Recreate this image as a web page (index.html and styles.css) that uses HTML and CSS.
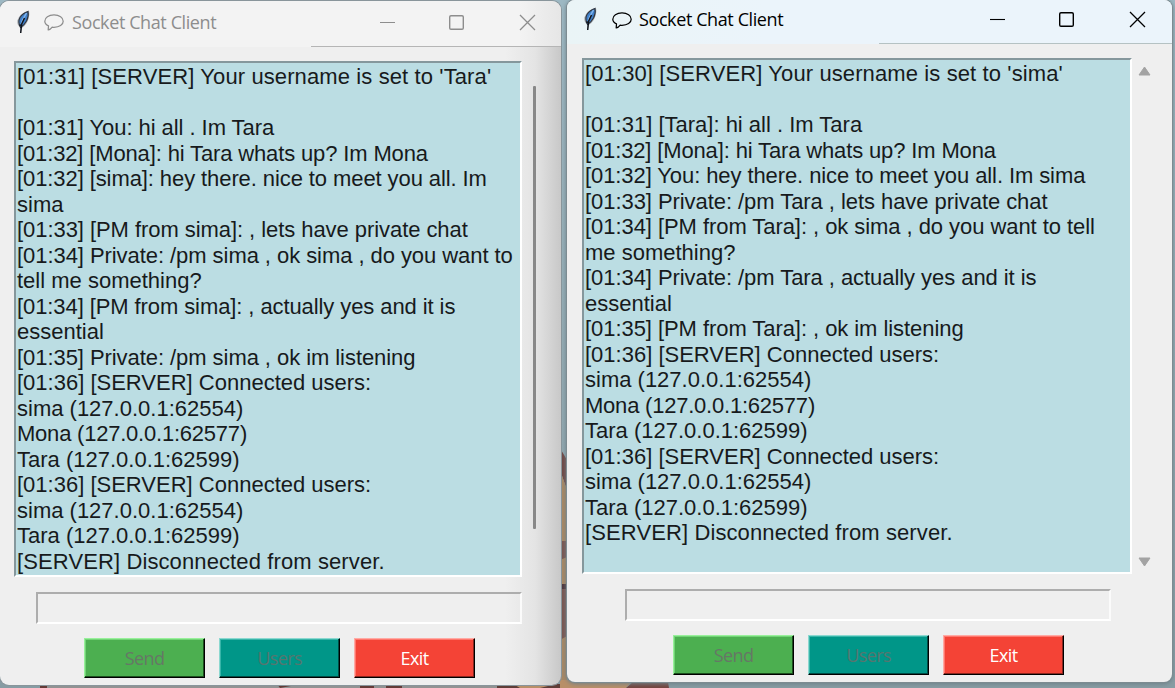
FILE: index.html
```html
<!DOCTYPE html>
<html lang="en">
<head>
<meta charset="utf-8">
<title>Socket Chat Client</title>
<link rel="stylesheet" href="styles.css">
</head>
<body>
<svg width="0" height="0" class="defs">
  <symbol id="feather" viewBox="0 0 14 24">
    <path d="M4.500 23.500 4.600 17.500Q.8 15.500 1.300 10.500Q3.500 3.500 12.800 .5Q14 3.500 12.500 9Q10.500 15 6 18Z" fill="#a9afb5"/>
    <path d="M4.500 17.500Q1.500 12 4 7.500Q7 3 12 1.500Q13 6 10.500 11Q8 15.500 4.500 17.500Z" fill="#3f7fc8" stroke="#30353d" stroke-width="1.100"/>
    <path d="M10.500 3 6.500 10 4.800 16" fill="none" stroke="#80b5ee" stroke-width="1.500"/>
    <path d="M8.500 8 5.500 14.500 4.700 23M3.500 15 6.500 15.500" fill="none" stroke="#10141b" stroke-width="1.500"/>
  </symbol>
  <symbol id="bubble" viewBox="0 0 20 17">
    <path d="M4.200 15.900 4.500 11.900C2.300 10.900.8 9.200.8 7.200.8 3.600 4.600.900 10 .900S19.200 3.600 19.200 7.200 15.400 13.300 10 13.300Q9 13.300 8.200 13.100Q6.500 15.400 4.200 15.900Z" fill="none" stroke="currentColor" stroke-width="1.250" stroke-linejoin="round"/>
  </symbol>
  <symbol id="controls" viewBox="0 0 157 17">
    <path d="M0 8.500H15" fill="none" stroke="currentColor" stroke-width="1.100"/>
    <rect x="69.700" y="1.700" width="13.600" height="13.600" rx="1.300" fill="none" stroke="currentColor" stroke-width="1.400"/>
    <path d="M140 1 155 16M155 1 140 16" fill="none" stroke="currentColor" stroke-width="1.300"/>
  </symbol>
</svg>
<main class="desktop">
  <svg class="wallpaper" width="1175" height="688" viewBox="0 0 1175 688">
    <path d="M560 448 567 460V490L560 470Z" fill="#6f4744"/>
    <path d="M560 470 567 490V688H560Z" fill="#a98762"/>
    <path d="M560 541H567V557L560 560ZM560 587H567V636L560 640Z" fill="#7b5650"/>
    <path d="M560 584H567V589H560Z" fill="#4f3439"/>
    <path d="M42 684H500V688H42Z" fill="#929292"/>
    <path d="M40 684H47V688H40ZM277 684H302L280 688ZM360 685H374V688H360ZM386 685H402V688H386Z" fill="#633b37"/>
    <path d="M497 684H565L560 688H497Z" fill="#5f3d37"/>
    <path d="M515 685H552L540 688H520ZM560 680H633L626 688H560Z" fill="#b98f68"/>
    <path d="M633 682H668L669 688H626Z" fill="#74443e"/>
  </svg>
  <section class="window inactive">
    <header class="titlebar">
      <svg class="feather"><use href="#feather"/></svg>
      <svg class="bubble"><use href="#bubble"/></svg>
      <span class="title">Socket Chat Client</span>
      <svg class="controls"><use href="#controls"/></svg>
    </header>
    <div class="chat">
      <div class="log"><span class="wide">[01:31] [SERVER] Your username is set to 'Tara'</span>

<span class="snug">[01:31] You: hi all . Im Tara</span>
<span class="tight">[01:32] [Mona]: hi Tara whats up? Im Mona</span>
<span class="close">[01:32] [sima]: hey there. nice to meet you all. Im</span>
sima
<span class="snug">[01:33] [PM from sima]: , lets have private chat</span>
<span class="snug">[01:34] Private: /pm sima , ok sima , do you want to</span>
tell me something?
<span class="close">[01:34] [PM from sima]: , actually yes and it is</span>
essential
<span class="snug">[01:35] Private: /pm sima , ok im listening</span>
[01:36] [SERVER] Connected users:
sima (127.0.0.1:62554)
<span class="tighter">Mona (127.0.0.1:62577)</span>
Tara (127.0.0.1:62599)
[01:36] [SERVER] Connected users:
sima (127.0.0.1:62554)
Tara (127.0.0.1:62599)
<span class="wide">[SERVER] Disconnected from server.</span></div>
      <div class="scroll-thumb"></div>
    </div>
    <div class="entry"></div>
    <div class="buttons">
      <div class="btn send">Send</div><div class="btn users">Users</div><div class="btn exit">Exit</div>
    </div>
  </section>
  <section class="window active">
    <header class="titlebar">
      <svg class="feather"><use href="#feather"/></svg>
      <svg class="bubble"><use href="#bubble"/></svg>
      <span class="title">Socket Chat Client</span>
      <svg class="controls"><use href="#controls"/></svg>
    </header>
    <div class="chat">
      <div class="log"><span class="wide">[01:30] [SERVER] Your username is set to 'sima'</span>

[01:31] [Tara]: hi all . Im Tara
<span class="tight">[01:32] [Mona]: hi Tara whats up? Im Mona</span>
<span class="close">[01:32] You: hey there. nice to meet you all. Im sima</span>
<span class="snug">[01:33] Private: /pm Tara , lets have private chat</span>
<span class="snug">[01:34] [PM from Tara]: , ok sima , do you want to tell</span>
me something?
<span class="snug">[01:34] Private: /pm Tara , actually yes and it is</span>
essential
<span class="snug">[01:35] [PM from Tara]: , ok im listening</span>
[01:36] [SERVER] Connected users:
sima (127.0.0.1:62554)
<span class="tighter">Mona (127.0.0.1:62577)</span>
Tara (127.0.0.1:62599)
[01:36] [SERVER] Connected users:
sima (127.0.0.1:62554)
Tara (127.0.0.1:62599)
<span class="wide">[SERVER] Disconnected from server.</span></div>
      <div class="arrows">
        <svg width="13" height="10" viewBox="0 0 13 10"><path d="M6.500 1 12 9H1Z" fill="#a3a3a3" stroke="#a3a3a3" stroke-linejoin="round"/></svg>
        <svg width="13" height="10" viewBox="0 0 13 10"><path d="M6.500 9 12 1H1Z" fill="#a3a3a3" stroke="#a3a3a3" stroke-linejoin="round"/></svg>
      </div>
    </div>
    <div class="entry"></div>
    <div class="buttons">
      <div class="btn send">Send</div><div class="btn users">Users</div><div class="btn exit">Exit</div>
    </div>
  </section>
</main>
</body>
</html>
```
FILE: styles.css
```css
* { box-sizing: border-box; }
body { margin: 0; overflow: hidden; }
.defs { position: absolute; }
.desktop {
  position: relative;
  width: 1175px;
  height: 688px;
  overflow: hidden;
  background: linear-gradient(#9db8c3, #91a8b0 60%, #879ca3);
}
.wallpaper { position: absolute; left: 0; top: 0; }
.window {
  position: absolute;
  overflow: hidden;
  background: #efefef;
}
.inactive {
  left: 0;
  top: 1px;
  width: 561px;
  height: 684px;
  border-radius: 9px;
  background: linear-gradient(90deg, #efefef 505px, #e4e4e4 535px, #c8c8c8 561px);
  box-shadow: 0 0 0 1px #89959b;
}
.active {
  left: 567px;
  top: 0;
  width: 605px;
  height: 682px;
  border-radius: 8px;
  box-shadow: 0 0 0 1px #7d8b91, 0 1px 4px 1px #6f8188;
}
.titlebar {
  display: flex;
  align-items: flex-start;
  height: 46px;
  padding: 9px 0 0 16px;
  background: linear-gradient(#b5b5b5, #b5b5b5) right bottom / 250px 1px no-repeat,
    linear-gradient(90deg, #f3f3f3 520px, #e6e6e6 561px);
  color: #8d8d8d;
}
.active .titlebar {
  height: 44px;
  padding: 7px 0 0 16px;
  background: linear-gradient(#b5c2c3, #b5c2c3) right bottom / 293px 1px no-repeat,
    linear-gradient(90deg, #eaf4f6, #ebf4fb 200px);
  color: #000;
}
.feather { width: 14px; height: 24px; }
.bubble { width: 20px; height: 17px; margin: 4px 0 0 14px; }
.title {
  width: 150px;
  margin-left: 8px;
  font: 18px/25px "Open Sans", sans-serif;
  letter-spacing: -0.4px;
  white-space: nowrap;
}
.controls { width: 157px; height: 17px; margin: 4px 0 0 158px; }
.active .bubble { margin: 5px 0 0 15px; }
.active .title { margin-left: 7px; }
.active .controls { margin-left: 201px; }
.chat { display: flex; margin: 14px 0 0 14px; }
.active .chat { margin: 14px 0 0 15px; }
.log {
  width: 508px;
  height: 516px;
  padding: 1px 0 0 1px;
  overflow: hidden;
  border: 2px solid;
  border-color: #85979c #fff #fff #85979c;
  background: #bbdde3;
  color: #171a1c;
  font: 22px/25.500px "Liberation Sans", Arial, sans-serif;
  white-space: pre;
}
.active .log { width: 550px; }
.wide { letter-spacing: 0.11px; }
.snug { letter-spacing: -0.06px; }
.close { letter-spacing: -0.09px; }
.tight { letter-spacing: -0.14px; }
.tighter { letter-spacing: -0.22px; }
.scroll-thumb {
  width: 3px;
  height: 443px;
  margin: 25px 0 0 11px;
  border-radius: 1px;
  background: #888;
}
.arrows {
  display: flex;
  flex-direction: column;
  justify-content: space-between;
  padding: 8px 0 7px 6px;
}
.entry {
  width: 486px;
  height: 32px;
  margin: 15px 0 0 36px;
  border: 2px solid;
  border-color: #adadad #fbfbfb #fff #adadad;
}
.active .entry { margin-left: 58px; }
.buttons { display: flex; gap: 14px; margin: 14px 0 0 84px; }
.active .buttons { margin-left: 106px; }
.btn {
  width: 121px;
  height: 40px;
  border: 1px solid;
  border-right-color: #000;
  border-bottom-color: #000;
  font: 18px/38px "Open Sans", sans-serif;
  letter-spacing: -0.6px;
  text-align: center;
}
.send {
  background: #4caf50;
  border-top-color: #98f09b;
  border-left-color: #98f09b;
  box-shadow: inset -1px -1px #1c4f1e, inset 1px 1px #72d476;
  color: #667766;
}
.users {
  background: #009688;
  border-top-color: #8bd8d0;
  border-left-color: #8bd8d0;
  box-shadow: inset -1px -1px #004c45, inset 1px 1px #38b5a9;
  color: #56756f;
}
.exit {
  background: #f44336;
  border-top-color: #ffaaa4;
  border-left-color: #ffaaa4;
  box-shadow: inset -1px -1px #8a261f, inset 1px 1px #ff776d;
  color: #fff;
}
```
